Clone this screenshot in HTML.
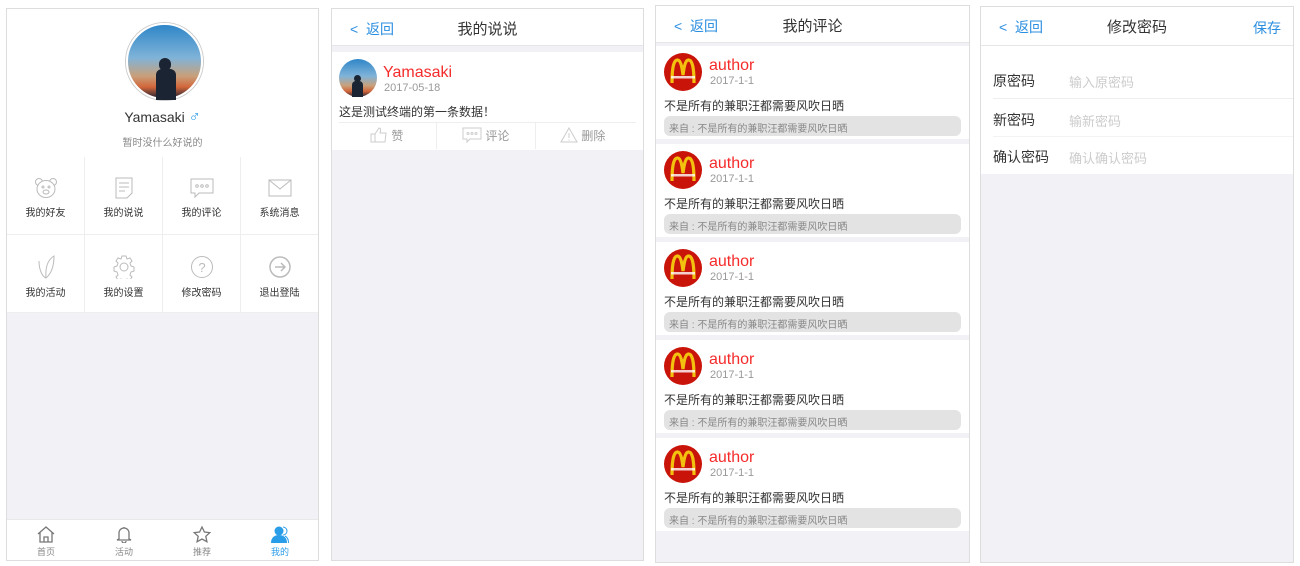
<!DOCTYPE html><html><head><meta charset="utf-8"><style>
*{box-sizing:border-box;margin:0;padding:0}
body{width:1300px;height:566px;background:#fff;font-family:"Liberation Sans","Noto Sans CJK SC",sans-serif;position:relative;overflow:hidden}
.p{position:absolute;background:#f2f2f6;border:1px solid #ddd;overflow:hidden}
.hd{position:absolute;left:0;right:0;top:0;height:37px;background:#fff;border-bottom:1px solid #e6e6e6}
.back{position:absolute;left:18px;top:10px;color:#2a8ee0;font-size:14px}
.ttl{position:absolute;left:0;right:0;top:9px;text-align:center;font-size:15px;color:#333}
.ab{position:absolute}
.cell{position:absolute;width:78px;height:78px;border-right:1px solid #eee;border-bottom:1px solid #eee;background:#fff;text-align:center;font-size:10px;color:#333}
.cell svg{display:block;margin:20px auto 5px}
.av{border-radius:50%;background:linear-gradient(180deg,#2f86c8 0%,#7fb3d8 45%,#c9a07a 70%,#d2663a 85%,#223 100%);overflow:hidden}
.mc{position:absolute;left:8px;width:38px;height:38px}
.card{position:absolute;left:0;right:0;height:93px;background:#fff}
.tab{position:absolute;width:78px;text-align:center;font-size:9px;color:#888}
</style></head><body>

<!-- panel 1 -->
<div class="p" style="left:6px;top:8px;width:313px;height:553px">
 <div class="ab" style="left:0;right:0;top:0;height:148px;background:#fff"></div>
 <div class="ab av" style="left:119px;top:14px;width:77px;height:77px;border:2px solid #fff;box-shadow:0 0 0 1px #ccc"></div>
 <div class="ab" style="left:152px;top:49px;width:12px;height:13px;background:#1b2433;border-radius:6px"></div>
 <div class="ab" style="left:149px;top:60px;width:20px;height:31px;background:#1b2433;border-radius:6px 6px 0 0"></div>
 <div class="ab" style="left:0;right:0;top:100px;text-align:center;font-size:14px;color:#333">Yamasaki <span style="color:#2a9de8;font-size:16px">♂</span></div>
 <div class="ab" style="left:0;right:0;top:125px;text-align:center;font-size:10px;color:#888">暂时没什么好说的</div>
 <div class="cell" style="left:0;top:148px"><svg width="24" height="22" viewBox="0 0 24 22" fill="none" stroke="#bbb"><circle cx="5" cy="5" r="3.5"/><circle cx="19" cy="5" r="3.5"/><ellipse cx="12" cy="12" rx="9" ry="8.5" fill="#fff"/><circle cx="9" cy="10" r="1"/><circle cx="15" cy="10" r="1"/><ellipse cx="12" cy="15" rx="3" ry="2"/></svg>我的好友</div>
 <div class="cell" style="left:78px;top:148px"><svg width="20" height="22" viewBox="0 0 20 22" fill="none" stroke="#bbb"><path d="M2 1h16v15l-5 5H2z M5 6h10M5 10h10M5 14h6"/></svg>我的说说</div>
 <div class="cell" style="left:156px;top:148px"><svg width="24" height="22" viewBox="0 0 24 22" fill="none" stroke="#bbb"><path d="M1 2h22v14H9l-4 4v-4H1z"/><circle cx="7" cy="9" r="1.3"/><circle cx="12" cy="9" r="1.3"/><circle cx="17" cy="9" r="1.3"/></svg>我的评论</div>
 <div class="cell" style="left:234px;top:148px"><svg width="24" height="22" viewBox="0 0 24 22" fill="none" stroke="#bbb"><rect x="1" y="3" width="22" height="16"/><path d="M1 3l11 9 11-9"/></svg>系统消息</div>
 <div class="cell" style="left:0;top:226px"><svg width="22" height="24" viewBox="0 0 22 24" fill="none" stroke="#bbb"><path d="M4 6c0 10 4 16 7 17 6-5 8-14 8-22-5 3-9 9-8 22"/></svg>我的活动</div>
 <div class="cell" style="left:78px;top:226px"><svg width="24" height="24" viewBox="0 0 24 24" fill="none" stroke="#bbb"><circle cx="12" cy="12" r="4"/><path d="M10 1h4l1 3 3-1 2 3-2 2 1 3 3 1v4l-3 1-1 3 2 2-2 3-3-1-1 3h-4l-1-3-3 1-2-3 2-2-1-3-3-1v-4l3-1 1-3-2-2 2-3 3 1z"/></svg>我的设置</div>
 <div class="cell" style="left:156px;top:226px"><svg width="24" height="24" viewBox="0 0 24 24" fill="none" stroke="#bbb"><circle cx="12" cy="12" r="10.5"/><text x="12" y="17" font-size="13" text-anchor="middle" fill="#bbb" stroke="none" font-family="Liberation Sans">?</text></svg>修改密码</div>
 <div class="cell" style="left:234px;top:226px"><svg width="24" height="24" viewBox="0 0 24 24" fill="none" stroke="#bbb" stroke-width="1.5"><circle cx="12" cy="12" r="10"/><path d="M7 12h10M13 8l4 4-4 4"/></svg>退出登陆</div>
 <div class="ab" style="left:0;right:0;top:510px;height:43px;background:#fff;border-top:1px solid #e8e8e8"></div>
 <div class="tab" style="left:0;top:517px"><svg width="18" height="17" viewBox="0 0 18 17" fill="none" stroke="#777" stroke-width="1.3"><path d="M1 8L9 1l8 7M3 6v10h12V6M7 16v-5h4v5"/></svg><br>首页</div>
 <div class="tab" style="left:78px;top:517px"><svg width="18" height="17" viewBox="0 0 18 17" fill="none" stroke="#777" stroke-width="1.3"><path d="M4 13V7a5 5 0 0110 0v6l2 1H2zM7 15a2 2 0 004 0M9 1v1"/></svg><br>活动</div>
 <div class="tab" style="left:156px;top:517px"><svg width="18" height="17" viewBox="0 0 18 17" fill="none" stroke="#777" stroke-width="1.3"><path d="M9 1l2.4 5 5.4.6-4 3.7 1.1 5.4L9 13l-4.9 2.7 1.1-5.4-4-3.7 5.4-.6z"/></svg><br>推荐</div>
 <div class="tab" style="left:234px;top:517px;color:#2a9de8"><svg width="18" height="17" viewBox="0 0 18 17"><circle cx="8" cy="5" r="4.5" fill="#2a9de8"/><path d="M0 17c0-6 4-8 8-8s8 2 8 8z" fill="#2a9de8"/><path d="M12 1a4 4 0 010 8M14 10c2 1 3.5 3 3.5 7" stroke="#2a9de8" fill="none"/></svg><br>我的</div>
</div>

<!-- panel 2 -->
<div class="p" style="left:331px;top:8px;width:313px;height:553px">
 <div class="hd"><span class="back">&lt;&nbsp; 返回</span><div class="ttl">我的说说</div></div>
 <div class="ab" style="left:0;right:0;top:43px;height:98px;background:#fff"></div>
 <div class="ab av" style="left:7px;top:50px;width:38px;height:38px"></div>
 <div class="ab" style="left:22px;top:66px;width:7px;height:7px;background:#1b2433;border-radius:4px"></div>
 <div class="ab" style="left:20px;top:72px;width:11px;height:16px;background:#1b2433;border-radius:4px 4px 0 0"></div>
 <div class="ab" style="left:51px;top:55px;font-size:16px;color:#f52b2b">Yamasaki</div>
 <div class="ab" style="left:52px;top:73px;font-size:11px;color:#999">2017-05-18</div>
 <div class="ab" style="left:7px;top:94px;font-size:12px;color:#333">这是测试终端的第一条数据！</div>
 <div class="ab" style="left:7px;right:7px;top:113px;border-top:1px solid #eee"></div>
 <div class="ab" style="left:104px;top:114px;height:26px;border-left:1px solid #eee"></div>
 <div class="ab" style="left:203px;top:114px;height:26px;border-left:1px solid #eee"></div>
 <div class="ab" style="left:38px;top:118px;font-size:12px;color:#999"><svg width="18" height="16" viewBox="0 0 18 16" fill="none" stroke="#ccc" style="vertical-align:-3px"><path d="M1 7h4v8H1zM5 7l4-6c2 0 2 2 1 5h6l-1 9H5"/></svg> 赞</div>
 <div class="ab" style="left:130px;top:118px;font-size:12px;color:#999"><svg width="20" height="16" viewBox="0 0 20 16" fill="none" stroke="#ccc" style="vertical-align:-3px"><path d="M1 1h18v11H8l-3 3v-3H1z"/><circle cx="6" cy="6.5" r="1"/><circle cx="10" cy="6.5" r="1"/><circle cx="14" cy="6.5" r="1"/></svg> 评论</div>
 <div class="ab" style="left:228px;top:118px;font-size:12px;color:#999"><svg width="18" height="16" viewBox="0 0 18 16" fill="none" stroke="#ccc" style="vertical-align:-3px"><path d="M9 1l8 14H1zM9 6v5M9 12.5v1"/></svg> 删除</div>
</div>

<!-- panel 3 -->
<div class="p" style="left:655px;top:5px;width:315px;height:558px">
 <div class="hd"><span class="back">&lt;&nbsp; 返回</span><div class="ttl">我的评论</div></div>
 <div class="card" style="top:40px"></div><div class="card" style="top:138px"></div><div class="card" style="top:236px"></div><div class="card" style="top:334px"></div><div class="card" style="top:432px"></div>
 <div class="ab" style="left:0;right:0;top:0">
  <svg class="mc" style="top:47px" viewBox="0 0 38 38"><circle cx="19" cy="19" r="19" fill="#c9140a"/><path d="M8 30C8 10 11 7 13.5 7C16.5 7 18 14 19 22C20 14 21.5 7 24.5 7C27 7 30 10 30 30" stroke="#f3c20f" stroke-width="3.2" fill="none"/><rect x="7" y="23" width="24" height="2.5" fill="#fff" opacity=".8"/></svg>
  <div class="ab" style="left:53px;top:51px;font-size:16px;color:#f52b2b">author</div><div class="ab" style="left:54px;top:69px;font-size:11px;color:#999">2017-1-1</div><div class="ab" style="left:8px;top:91px;font-size:12px;color:#333">不是所有的兼职汪都需要风吹日晒</div><div class="ab" style="left:8px;right:8px;top:110px;height:20px;background:#e3e3e3;border-radius:6px;font-size:10px;color:#888;padding:4px 5px">来自 : 不是所有的兼职汪都需要风吹日晒</div>
 </div>
 <div class="ab" style="left:0;right:0;top:98px">
  <svg class="mc" style="top:47px" viewBox="0 0 38 38"><circle cx="19" cy="19" r="19" fill="#c9140a"/><path d="M8 30C8 10 11 7 13.5 7C16.5 7 18 14 19 22C20 14 21.5 7 24.5 7C27 7 30 10 30 30" stroke="#f3c20f" stroke-width="3.2" fill="none"/><rect x="7" y="23" width="24" height="2.5" fill="#fff" opacity=".8"/></svg>
  <div class="ab" style="left:53px;top:51px;font-size:16px;color:#f52b2b">author</div><div class="ab" style="left:54px;top:69px;font-size:11px;color:#999">2017-1-1</div><div class="ab" style="left:8px;top:91px;font-size:12px;color:#333">不是所有的兼职汪都需要风吹日晒</div><div class="ab" style="left:8px;right:8px;top:110px;height:20px;background:#e3e3e3;border-radius:6px;font-size:10px;color:#888;padding:4px 5px">来自 : 不是所有的兼职汪都需要风吹日晒</div>
 </div>
 <div class="ab" style="left:0;right:0;top:196px">
  <svg class="mc" style="top:47px" viewBox="0 0 38 38"><circle cx="19" cy="19" r="19" fill="#c9140a"/><path d="M8 30C8 10 11 7 13.5 7C16.5 7 18 14 19 22C20 14 21.5 7 24.5 7C27 7 30 10 30 30" stroke="#f3c20f" stroke-width="3.2" fill="none"/><rect x="7" y="23" width="24" height="2.5" fill="#fff" opacity=".8"/></svg>
  <div class="ab" style="left:53px;top:51px;font-size:16px;color:#f52b2b">author</div><div class="ab" style="left:54px;top:69px;font-size:11px;color:#999">2017-1-1</div><div class="ab" style="left:8px;top:91px;font-size:12px;color:#333">不是所有的兼职汪都需要风吹日晒</div><div class="ab" style="left:8px;right:8px;top:110px;height:20px;background:#e3e3e3;border-radius:6px;font-size:10px;color:#888;padding:4px 5px">来自 : 不是所有的兼职汪都需要风吹日晒</div>
 </div>
 <div class="ab" style="left:0;right:0;top:294px">
  <svg class="mc" style="top:47px" viewBox="0 0 38 38"><circle cx="19" cy="19" r="19" fill="#c9140a"/><path d="M8 30C8 10 11 7 13.5 7C16.5 7 18 14 19 22C20 14 21.5 7 24.5 7C27 7 30 10 30 30" stroke="#f3c20f" stroke-width="3.2" fill="none"/><rect x="7" y="23" width="24" height="2.5" fill="#fff" opacity=".8"/></svg>
  <div class="ab" style="left:53px;top:51px;font-size:16px;color:#f52b2b">author</div><div class="ab" style="left:54px;top:69px;font-size:11px;color:#999">2017-1-1</div><div class="ab" style="left:8px;top:91px;font-size:12px;color:#333">不是所有的兼职汪都需要风吹日晒</div><div class="ab" style="left:8px;right:8px;top:110px;height:20px;background:#e3e3e3;border-radius:6px;font-size:10px;color:#888;padding:4px 5px">来自 : 不是所有的兼职汪都需要风吹日晒</div>
 </div>
 <div class="ab" style="left:0;right:0;top:392px">
  <svg class="mc" style="top:47px" viewBox="0 0 38 38"><circle cx="19" cy="19" r="19" fill="#c9140a"/><path d="M8 30C8 10 11 7 13.5 7C16.5 7 18 14 19 22C20 14 21.5 7 24.5 7C27 7 30 10 30 30" stroke="#f3c20f" stroke-width="3.2" fill="none"/><rect x="7" y="23" width="24" height="2.5" fill="#fff" opacity=".8"/></svg>
  <div class="ab" style="left:53px;top:51px;font-size:16px;color:#f52b2b">author</div><div class="ab" style="left:54px;top:69px;font-size:11px;color:#999">2017-1-1</div><div class="ab" style="left:8px;top:91px;font-size:12px;color:#333">不是所有的兼职汪都需要风吹日晒</div><div class="ab" style="left:8px;right:8px;top:110px;height:20px;background:#e3e3e3;border-radius:6px;font-size:10px;color:#888;padding:4px 5px">来自 : 不是所有的兼职汪都需要风吹日晒</div>
 </div>
</div>

<!-- panel 4 -->
<div class="p" style="left:980px;top:6px;width:314px;height:557px">
 <div class="hd" style="height:39px"><span class="back">&lt;&nbsp; 返回</span><div class="ttl">修改密码</div><span class="ab" style="right:12px;top:11px;color:#2a8ee0;font-size:14px">保存</span></div>
 <div class="ab" style="left:0;right:0;top:39px;height:128px;background:#fff"></div>
 <div class="ab" style="left:12px;top:64px;font-size:14px;color:#333">原密码</div><div class="ab" style="left:88px;top:65px;font-size:13px;color:#ccc">输入原密码</div>
 <div class="ab" style="left:12px;right:0;top:91px;border-top:1px solid #eee"></div>
 <div class="ab" style="left:12px;top:103px;font-size:14px;color:#333">新密码</div><div class="ab" style="left:88px;top:104px;font-size:13px;color:#ccc">输新密码</div>
 <div class="ab" style="left:12px;right:0;top:129px;border-top:1px solid #f3f3f3"></div>
 <div class="ab" style="left:12px;top:140px;font-size:14px;color:#333">确认密码</div><div class="ab" style="left:88px;top:141px;font-size:13px;color:#ccc">确认确认密码</div>
</div>
</body></html>
